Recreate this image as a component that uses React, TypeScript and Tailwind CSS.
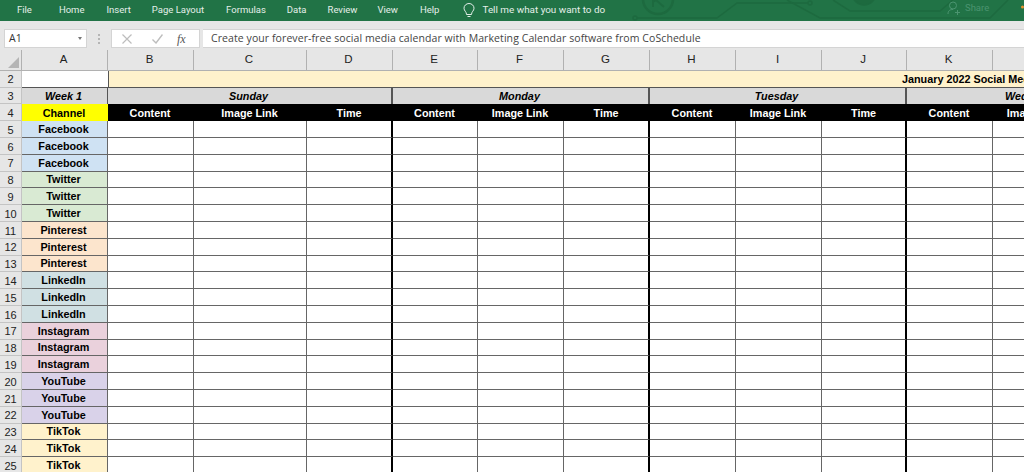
import { Fragment } from "react";

const menu = ["File", "Home", "Insert", "Page Layout", "Formulas", "Data", "Review", "View", "Help"];
const menuLeft = ["ml-[17px]", "ml-[27px]", "ml-[22px]", "ml-[21px]", "ml-[22px]", "ml-[21px]", "ml-[21px]", "ml-[20px]", "ml-[22px]"];
const letters = ["B", "C", "D", "E", "F", "G", "H", "I", "J", "K", "L", "M"];

const channels = [
  { name: "Facebook", bg: "bg-[#cfe2f3]" },
  { name: "Twitter", bg: "bg-[#d9ead3]" },
  { name: "Pinterest", bg: "bg-[#fce5cd]" },
  { name: "LinkedIn", bg: "bg-[#d0e0e3]" },
  { name: "Instagram", bg: "bg-[#ead1dc]" },
  { name: "YouTube", bg: "bg-[#d9d2e9]" },
  { name: "TikTok", bg: "bg-[#fff2cc]" },
];

const rows = channels.flatMap((c) => [c, c, c]);

// thick black line closes each day: right side of D, G and J
const isDayEnd = (i: number) => i === 2 || i === 5 || i === 8;

function RowNum({ n }: { n: number }) {
  return (
    <div className="flex items-center justify-center bg-[#e6e6e6] border-r border-b border-[#c4c4c4] text-[11px] text-[#222] pt-[2px]">
      {n}
    </div>
  );
}

export default function App() {
  return (
    <div className="w-[1024px] h-[472px] overflow-hidden bg-white font-['Liberation_Sans',Arial,sans-serif]">
      <div className="relative h-[21px] bg-[#217346] flex items-center overflow-hidden font-['Roboto',sans-serif] text-[9.5px] text-[#e4efe9]">
        {/* circuit board art behind the tabs */}
        <svg className="absolute left-[620px] top-0" width="404" height="21" viewBox="0 0 404 21" fill="none" stroke="#1d6a3f" strokeWidth="1.5">
          <circle cx="15" cy="18" r="2" />
          <path d="M17 18 H97 L117 3 H188" />
          <circle cx="190" cy="3" r="2" />
          <circle cx="38" cy="-1" r="15" strokeWidth="2.5" />
          <path d="M33 -4 V7 M33 2 L43 -4 M36 0 L44 7" strokeWidth="2" />
          <path d="M167 0 L200 18 H370 L388 0" />
          <path d="M213 0 L230 11 H320 L333 0" />
          <circle cx="244" cy="-7" r="12" fill="#1d6a3f" />
          <circle cx="402.5" cy="7" r="1.5" fill="#e8912d" stroke="none" />
        </svg>
        {menu.map((m, i) => (
          <span key={m} className={"relative " + menuLeft[i]}>
            {m}
          </span>
        ))}
        <svg className="relative ml-[24px]" width="12" height="16" viewBox="0 0 12 16" fill="none" stroke="#e4efe9" strokeWidth="1">
          <path d="M3.5 11.5 C3.5 8.5 1 8 1 5.2 A5 4.7 0 0 1 11 5.2 C11 8 8.5 8.5 8.5 11.5 Z" />
          <path d="M4.5 13.5 H7.5" />
        </svg>
        <span className="relative ml-[7px] text-[9.9px]">Tell me what you want to do</span>
        <svg className="absolute left-[947px] top-[1px]" width="14" height="14" viewBox="0 0 14 14" fill="none" stroke="#4b9470" strokeWidth="1">
          <circle cx="6" cy="4.5" r="3.5" />
          <path d="M1 13 C1 9.5 3 8.5 6 8.5 M10.5 9 V14 M8 11.5 H13" />
        </svg>
        <span className="absolute left-[965px] top-[1px] text-[#4b9470]">Share</span>
      </div>

      <div className="h-[29px] bg-[#e6e6e6] flex items-start pt-[8px] font-['Open_Sans',sans-serif]">
        <div className="ml-[4px] w-[83px] h-[19px] bg-white border border-[#d4d4d4] flex items-center justify-between px-[4px] text-[10.5px] text-[#333]">
          <span>A1</span>
          <span className="w-0 h-0 border-x-[2.5px] border-x-transparent border-t-[3px] border-t-[#777]" />
        </div>
        <div className="w-[24px] h-[19px] flex flex-col items-center justify-center gap-[2px]">
          <span className="w-[2px] h-[2px] bg-[#b5b5b5]" />
          <span className="w-[2px] h-[2px] bg-[#b5b5b5]" />
          <span className="w-[2px] h-[2px] bg-[#b5b5b5]" />
        </div>
        <div className="w-[89px] h-[19px] bg-white border border-[#d4d4d4] flex items-center">
          <svg className="ml-[10px]" width="10" height="10" viewBox="0 0 10 10" stroke="#bdbdbd" strokeWidth="1.2">
            <path d="M0.5 0.5 L9.5 9.5 M9.5 0.5 L0.5 9.5" />
          </svg>
          <svg className="ml-[20px]" width="11" height="10" viewBox="0 0 11 10" fill="none" stroke="#bdbdbd" strokeWidth="1.4">
            <path d="M0.5 5.5 L4 9 L10.5 0.5" />
          </svg>
          <span className="ml-[14px] text-[12px] italic font-['Liberation_Serif',serif] text-[#555]">fx</span>
        </div>
        <div className="ml-[3px] flex-1 h-[19px] bg-white border-y border-[#d4d4d4] flex items-center pl-[8px] text-[10.5px] tracking-[0.08px] text-[#444]">
          Create your forever-free social media calendar with Marketing Calendar software from CoSchedule
        </div>
      </div>

      <div className="w-max grid grid-cols-[22px_86px_86px_113px_86px_85px_86px_86px_86px_86px_85px_86px_86px_86px] grid-rows-[20.8px] auto-rows-[16.8px]">
        {/* column letters */}
        <div className="bg-[#e6e6e6] border-r border-b border-[#b1b1b1] relative overflow-hidden">
          <span className="absolute right-[2px] bottom-[2px] w-0 h-0 border-l-[11px] border-l-transparent border-b-[11px] border-b-[#b5b5b5]" />
        </div>
        <div className="flex items-center justify-center pr-[2px] bg-[#e6e6e6] border-r border-b border-[#b1b1b1] text-[11.5px] text-[#222]">A</div>
        {letters.map((l, i) => (
          <div key={l} className="flex items-center justify-center pr-[2px] bg-[#e6e6e6] border-r border-b border-[#b1b1b1] text-[11.5px] text-[#222]">
            {i < 10 ? l : ""}
          </div>
        ))}

        {/* row 2 */}
        <RowNum n={2} />
        <div className="bg-white border-b border-[#555]" />
        <div className="col-span-12 flex items-center pl-[793px] bg-[#fff2cc] border-l border-b border-[#555] text-[10.8px] font-bold text-black whitespace-nowrap">
          January 2022 Social Media Calendar
        </div>

        {/* row 3 */}
        <RowNum n={3} />
        <div className="flex items-center justify-center pr-[2px] bg-[#d9d9d9] border-r border-[#555] text-[10.8px] font-bold italic text-black">Week 1</div>
        <div className="col-span-3 flex items-center justify-center pr-[2px] bg-[#d9d9d9] border-r-2 border-[#555] text-[10.8px] font-bold italic text-black">Sunday</div>
        <div className="col-span-3 flex items-center justify-center pr-[2px] bg-[#d9d9d9] border-r-2 border-[#555] text-[10.8px] font-bold italic text-black">Monday</div>
        <div className="col-span-3 flex items-center justify-center pr-[2px] bg-[#d9d9d9] border-r-2 border-[#555] text-[10.8px] font-bold italic text-black">Tuesday</div>
        <div className="col-span-3 flex items-center justify-center pr-[2px] bg-[#d9d9d9] text-[10.8px] font-bold italic text-black">Wednesday</div>

        {/* row 4 */}
        <RowNum n={4} />
        <div className="flex items-center justify-center pr-[2px] bg-[#ffff00] text-[10.8px] font-bold text-black">Channel</div>
        {letters.map((l, i) => (
          <div key={l} className="flex items-center justify-center pr-[2px] bg-black text-[10.8px] font-bold text-white whitespace-nowrap">
            {i % 3 === 0 ? "Content" : i % 3 === 1 ? "Image Link" : "Time"}
          </div>
        ))}

        {/* channel rows */}
        {rows.map((r, idx) => (
          <Fragment key={idx}>
            <RowNum n={idx + 5} />
            <div className={"flex items-center justify-center pr-[2px] border-r border-b border-[#666] text-[10.8px] font-bold text-black " + r.bg}>{r.name}</div>
            {letters.map((l, i) => (
              <div
                key={l}
                className={"bg-white border-b border-[#666] " + (isDayEnd(i) ? "border-r-2 border-r-black" : "border-r border-r-[#666]")}
              />
            ))}
          </Fragment>
        ))}
      </div>
    </div>
  );
}
